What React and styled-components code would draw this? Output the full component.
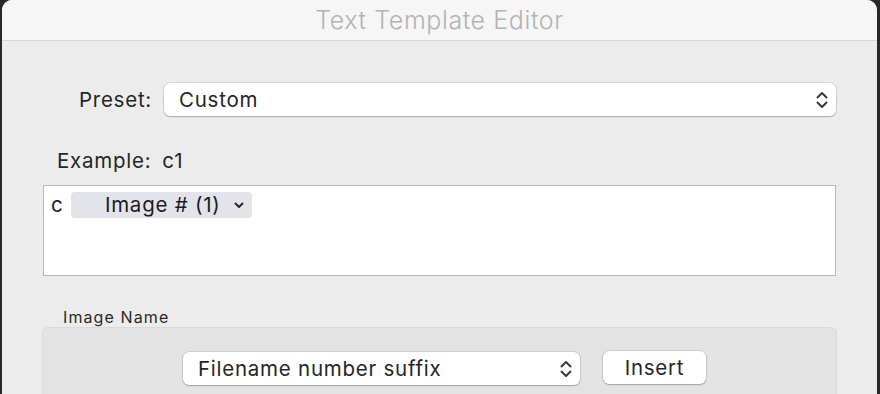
import React from "react";
import styled, { createGlobalStyle } from "styled-components";

const GlobalStyle = createGlobalStyle`
  html, body {
    margin: 0;
    padding: 0;
    background: #2b2724;
    overflow: hidden;
  }
  body {
    font-family: Inter, "Liberation Sans", sans-serif;
    -webkit-font-smoothing: antialiased;
  }
`;

const Window = styled.div`
  margin-left: 2px;
  width: 875px;
  height: 394px;
  background: #ececec;
  border-radius: 10px 10px 0 0;
  overflow: hidden;
  display: flex;
  flex-direction: column;
`;

const TitleBar = styled.div`
  height: 40px;
  flex: none;
  background: #f6f6f6;
  border-bottom: 1px solid #d6d6d6;
  display: flex;
  align-items: center;
  justify-content: center;
  font-size: 25px;
  font-weight: 300;
  color: #b3b3b3;
  letter-spacing: 0.6px;
`;

const Content = styled.div`
  padding: 42px 41px 0 41px;
  display: flex;
  flex-direction: column;
`;

const PresetRow = styled.div`
  display: grid;
  grid-template-columns: 109px 1fr;
  column-gap: 12px;
  align-items: center;
`;

const Label = styled.div`
  font-size: 20.5px;
  color: #262626;
  text-align: ${(p) => (p.$align === "right" ? "right" : "left")};
  letter-spacing: 0.75px;
`;

const Select = styled.div`
  height: 33px;
  box-sizing: border-box;
  width: ${(p) => p.$width || "auto"};
  background: #fff;
  border-radius: 6px;
  box-shadow: 0 0 0 0.5px rgba(0, 0, 0, 0.18), 0 1px 1.5px rgba(0, 0, 0, 0.22);
  display: flex;
  align-items: center;
  justify-content: space-between;
  padding: 0 7px 0 15px;
  font-size: 20.5px;
  color: #262626;
  letter-spacing: 0.75px;
`;

const ExampleRow = styled.div`
  margin-top: 33px;
  padding-left: 14px;
  display: flex;
  gap: 11px;
  font-size: 20.5px;
  line-height: 24px;
  color: #262626;
  letter-spacing: 0.75px;
`;

const TextBox = styled.div`
  margin-top: 12px;
  height: 91px;
  box-sizing: border-box;
  background: #fff;
  border: 1px solid #b9b9b9;
  padding: 6px 7px;
  display: flex;
  align-items: flex-start;
  gap: 8px;
  font-size: 20.5px;
  line-height: 26px;
  color: #1c1c1c;
  letter-spacing: 0.75px;
`;

const Token = styled.div`
  height: 26px;
  width: 181px;
  box-sizing: border-box;
  background: #e3e3ea;
  border-radius: 4px;
  display: flex;
  align-items: center;
  justify-content: flex-end;
  gap: 14px;
  padding-right: 8px;
`;

const GroupTitle = styled.div`
  margin-top: 32px;
  padding-left: 20px;
  font-size: 16px;
  line-height: 18px;
  color: #2a2a2a;
  letter-spacing: 1.1px;
`;

const GroupBox = styled.div`
  margin-top: 1px;
  margin-left: -1px;
  margin-right: -1px;
  height: 90px;
  background: #e3e3e3;
  border: 1px solid #dadada;
  border-radius: 6px;
  display: flex;
  justify-content: center;
  align-items: flex-start;
  gap: 23px;
  padding: 24px 0 0 10px;
`;

const Button = styled.div`
  height: 33px;
  width: 103px;
  box-sizing: border-box;
  background: #fff;
  border-radius: 6px;
  box-shadow: 0 0 0 0.5px rgba(0, 0, 0, 0.18), 0 1px 1.5px rgba(0, 0, 0, 0.22);
  display: flex;
  align-items: center;
  justify-content: center;
  font-size: 20.5px;
  color: #262626;
  letter-spacing: 0.75px;
  margin-top: -1px;
`;

const UpDown = () => (
  <svg width="14" height="20" viewBox="0 0 14 20" fill="none">
    <path
      d="M2.5 7.5 L7 3 L11.5 7.5 M2.5 12.5 L7 17 L11.5 12.5"
      stroke="#3a3a3a"
      strokeWidth="2"
      strokeLinecap="round"
      strokeLinejoin="round"
    />
  </svg>
);

const ChevronDown = () => (
  <svg width="10" height="7" viewBox="0 0 10 7" fill="none">
    <path
      d="M1.5 1.5 L5 5 L8.5 1.5"
      stroke="#2a2a2a"
      strokeWidth="2"
      strokeLinecap="round"
      strokeLinejoin="round"
    />
  </svg>
);

export default function App() {
  return (
    <>
      <GlobalStyle />
      <Window>
        <TitleBar>Text Template Editor</TitleBar>
        <Content>
          <PresetRow>
            <Label $align="right">Preset:</Label>
            <Select>
              <span>Custom</span>
              <UpDown />
            </Select>
          </PresetRow>
          <ExampleRow>
            <span>Example:</span>
            <span>c1</span>
          </ExampleRow>
          <TextBox>
            <span>c</span>
            <Token>
              <span>Image # (1)</span>
              <ChevronDown />
            </Token>
          </TextBox>
          <GroupTitle>Image Name</GroupTitle>
          <GroupBox>
            <Select $width="397px">
              <span>Filename number suffix</span>
              <UpDown />
            </Select>
            <Button>Insert</Button>
          </GroupBox>
        </Content>
      </Window>
    </>
  );
}
